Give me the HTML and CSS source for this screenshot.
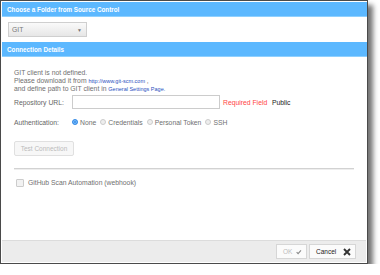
FILE: index.html
```html
<!DOCTYPE html>
<html>
<head>
<meta charset="utf-8">
<link rel="stylesheet" href="styles.css">
</head>
<body>
<div class="dialog">
  <div class="head">Choose a Folder from Source Control</div>
  <div class="sel-row">
    <div class="select"><span>GIT</span><span class="arrow">&#9660;</span></div>
  </div>
  <div class="head">Connection Details</div>
  <div class="content">
    <div class="msg">
      <div>GIT client is not defined.</div>
      <div>Please download it from <span class="link">http://www.git-scm.com</span> ,</div>
      <div>and define path to GIT client in <span class="link">General Settings Page.</span></div>
    </div>
    <div class="row repo">
      <span class="label">Repository URL:</span>
      <span class="input"></span>
      <span class="req">Required Field</span>
      <span class="public">Public</span>
    </div>
    <div class="row auth">
      <span class="label">Authentication:</span>
      <span class="radio on"></span><span class="opt">None</span>
      <span class="radio"></span><span class="opt">Credentials</span>
      <span class="radio"></span><span class="opt">Personal Token</span>
      <span class="radio"></span><span class="opt">SSH</span>
    </div>
    <div class="btn-row"><span class="test">Test Connection</span></div>
    <div class="sep"></div>
    <div class="row chk-row"><span class="chk"></span><span class="opt">GitHub Scan Automation (webhook)</span></div>
  </div>
  <div class="foot">
    <span class="fbtn ok">OK <svg width="9" height="8" viewBox="0 0 9 8"><path d="M1 4.2 L3.4 6.6 L8 1.4" fill="none" stroke="#8a8a8a" stroke-width="1.8"/></svg></span>
    <span class="fbtn cancel">Cancel <svg width="8" height="8" viewBox="0 0 8 8"><path d="M1 1 L7 7 M7 1 L1 7" stroke="#333" stroke-width="1.9"/></svg></span>
  </div>
</div>
</body>
</html>
```
FILE: styles.css
```css
html, body { margin: 0; padding: 0; background: #fff; }
body { font-family: "Liberation Sans", Arial, sans-serif; color: #666; }
.dialog {
  border: 1px solid #4a4a4a;
  background: #fff;
  box-shadow: 5px 5px 5px rgba(0,0,0,0.55);
  display: flex;
  flex-direction: column;
  padding: 1px 0 0 1px;
  box-sizing: content-box;
  width: 365px;
  height: 261px;
}
.head {
  height: 15px;
  background: #5cb8ff;
  color: #fff;
  font-weight: bold;
  font-size: 6.3px;
  line-height: 15px;
  padding-left: 5px;
  border-bottom: 1px solid #8fd0ff;
  box-sizing: border-box;
}
.sel-row { padding: 5px 0 5px 6px; }
.select {
  width: 79px; height: 15px; box-sizing: border-box;
  border: 1px solid #cfcfcf;
  background: linear-gradient(#fafafa, #e6e6e6);
  display: flex; align-items: center; justify-content: space-between;
  padding: 0 4px 0 3px;
  font-size: 6.8px; color: #777;
}
.arrow { font-size: 5px; color: #777; }
.content { padding: 12px 0 0 12px; flex: 1; font-size: 6.8px; }
.msg { line-height: 7.6px; color: #707070; }
.link { color: #2a4fc0; font-size: 5.5px; }
.row { display: flex; align-items: center; }
.label { width: 58px; color: #666; }
.repo { margin-top: 1px; height: 15px; }
.input { width: 148px; height: 14px; border: 1px solid #ccc; box-sizing: border-box; margin-right: 3px; }
.req { color: #f44; width: 49px; }
.public { color: #222; }
.auth { margin-top: 9px; }
.radio {
  width: 6px; height: 6px; border-radius: 50%; box-sizing: border-box;
  border: 1px solid #ccc; background: #eee; margin-right: 2px;
}
.radio.on { background: #3a8ee6; border-color: #3a8ee6; box-shadow: inset 0 0 0 1px #7fc0ff; }
.opt { margin-right: 4px; color: #707070; }
.btn-row { margin-top: 15px; }
.test {
  display: inline-flex; align-items: center; justify-content: center;
  width: 60px; height: 15px; box-sizing: border-box;
  border: 1px solid #e0e0e0; border-radius: 2px; background: #f7f7f7;
  color: #bbb; font-size: 6.5px;
}
.sep { margin: 12px 0 0 0; width: 340px; height: 1px; background: #d2d2d2; border-bottom: 1px solid #eee; }
.chk-row { margin-top: 9px; }
.chk { width: 6px; height: 6px; border: 1px solid #ccc; background: #f2f2f2; margin: 0 4px 0 2px; border-radius: 1px; }
.foot {
  height: 22px; background: #ececec; border-top: 1px solid #dcdcdc;
  display: flex; align-items: center; justify-content: flex-end; gap: 2px;
  padding-right: 10px; margin-bottom: 1px; box-sizing: border-box; margin-right: 1px;
}
.fbtn {
  height: 15px; box-sizing: border-box; border: 1px solid #d6d6d6; background: #fbfbfb;
  display: inline-flex; align-items: center; gap: 4px; font-size: 6.5px; padding: 0 4px 0 6px;
}
.ok { width: 31px; color: #bbb; }
.cancel { width: 47px; color: #222; justify-content: space-between; }
```
